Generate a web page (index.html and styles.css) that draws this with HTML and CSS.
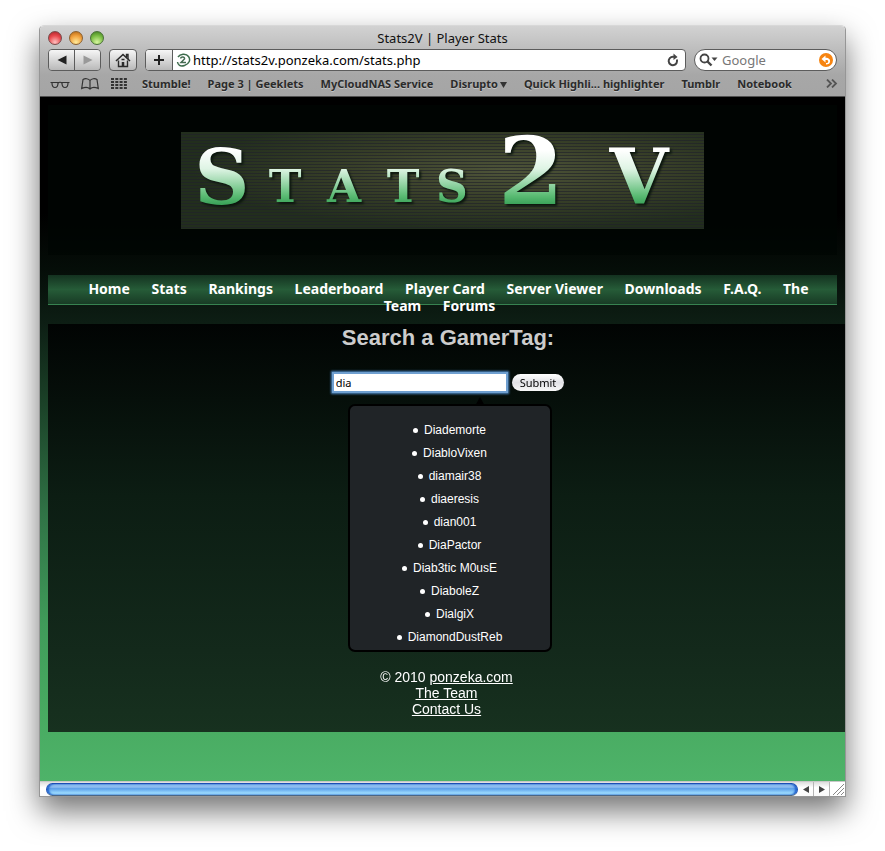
FILE: index.html
```html
<!DOCTYPE html>
<html lang="en">
<head>
<meta charset="utf-8">
<title>Stats2V | Player Stats</title>
<link rel="stylesheet" href="styles.css">
</head>
<body>
<div class="window">
  <header class="chrome">
    <div class="titlebar">
      <div class="lights">
        <button class="light red" aria-label="Close"></button>
        <button class="light amber" aria-label="Minimize"></button>
        <button class="light green" aria-label="Zoom"></button>
      </div>
      <div class="title">Stats2V | Player Stats</div>
    </div>
    <div class="toolbar">
      <div class="group">
        <button class="tool" aria-label="Back"><svg width="10" height="10" viewBox="0 0 10 10"><path d="M9.500 .5v9L.5 5z" fill="#222"/></svg></button>
        <button class="tool" aria-label="Forward"><svg width="10" height="10" viewBox="0 0 10 10"><path d="M.5 .5v9l9-4.500z" fill="#999"/></svg></button>
      </div>
      <button class="tool home" aria-label="Home"><svg width="16" height="15" viewBox="0 0 16 15" fill="none" stroke="#2b2b2b"><path d="M1 8 8 1.500 15 8" stroke-width="1.600"/><path d="M11.500 4V1.500h1.500V6M3.500 7.500v6h9v-6" stroke-width="1.400"/><path d="M8 9v4.500" stroke-width="2.500"/><path d="M6.500 6.500h3" stroke-width="1.500"/></svg></button>
      <div class="address">
        <button class="tool add" aria-label="Add bookmark"><svg width="12" height="12" viewBox="0 0 12 12"><path d="M6 1v10M1 6h10" stroke="#222" stroke-width="2"/></svg></button>
        <svg class="favicon" width="15" height="14" viewBox="0 0 15 14" fill="none"><path d="M2 4C4 1 10 0 12.500 3.500S13 11 8.500 12.500 2 12 1.500 9" stroke="#3d6b4c" stroke-width="1.500"/><path d="M4.500 5.500C5 3.500 9 3.500 8.500 6L5 9.500h5" stroke="#456b52" stroke-width="1.500"/></svg>
        <input class="url" type="text" aria-label="Address" value="http://stats2v.ponzeka.com/stats.php">
        <button class="plain reload" aria-label="Reload"><svg width="12" height="14" viewBox="0 0 12 14"><path d="M9.800 6.500A4.200 4.200 0 1 1 6 3.800h1.500" fill="none" stroke="#444" stroke-width="2"/><path d="M6.500 .5v6.500L10.500 4z" fill="#444"/></svg></button>
      </div>
      <div class="search">
        <svg width="19" height="14" viewBox="0 0 19 14"><circle cx="5.500" cy="5.500" r="4" fill="none" stroke="#444" stroke-width="1.800"/><path d="m8.500 8.500 4 4" stroke="#444" stroke-width="2.400"/><path d="M12.500 4.500h6l-3 3.500z" fill="#444"/></svg>
        <input class="google" type="text" aria-label="Search Google" placeholder="Google">
        <button class="plain" aria-label="Snap back"><svg width="14" height="14" viewBox="0 0 14 14"><circle cx="7" cy="7" r="7" fill="#f68411"/><path d="M2.500 6 6.500 2.500v2.200C10 4.700 11.500 6.500 11 9c-.4 1.800-2 2.500-4 2.500V10c1.500 0 2.200-.5 2.200-1.500 0-1-.9-1.500-2.700-1.400v2.400z" fill="#fff"/></svg></button>
      </div>
    </div>
    <nav class="bookmarks" aria-label="Bookmarks">
      <svg width="20" height="10" viewBox="0 0 20 10" fill="none" stroke="#333" stroke-width="1.200"><path d="M.5 3.500h8M11 3.500h8.500M8 4c1-1 3-1 4 0"/><path d="M2 4c0 3 1 4.500 3 4.500S8 7 8 4M12 4c0 3 1 4.500 3 4.500S18 7 18 4"/></svg>
      <svg class="book" width="18" height="12" viewBox="0 0 18 12" fill="none" stroke="#333" stroke-width="1.200"><path d="M9 2.500C7.500.5 4 .2 2 1.500L.7 10.500C4 9 7.500 9.500 9 11c1.500-1.500 5-2 8.300-.5L16 1.500C14 .2 10.500.5 9 2.500zV11"/></svg>
      <svg width="16" height="11" viewBox="0 0 16 11"><path d="M0 1h16M0 4h16M0 7h16M0 10h16" stroke="#333" stroke-width="2" stroke-dasharray="3 1.300"/></svg>
      <a class="first" href="#">Stumble!</a>
      <a href="#">Page 3 | Geeklets</a>
      <a href="#">MyCloudNAS Service</a>
      <a href="#">Disrupto<svg class="caret" width="7" height="6" viewBox="0 0 7 6"><path d="M0 0h7L3.500 6z" fill="#333"/></svg></a>
      <a href="#">Quick Highli... highlighter</a>
      <a href="#">Tumblr</a>
      <a href="#">Notebook</a>
      <button class="plain more" aria-label="More bookmarks"><svg width="12" height="9" viewBox="0 0 12 9"><path d="m1 .5 4 4-4 4m5-8 4 4-4 4" fill="none" stroke="#555" stroke-width="1.800"/></svg></button>
    </nav>
  </header>

  <main class="page">
    <div class="banner">
      <svg class="logo" viewBox="0 0 523 97" role="img" aria-label="Stats2V">
        <defs>
          <radialGradient id="glow" cx=".62" cy=".4" r=".6"><stop offset="0" stop-color="#4e5439"/><stop offset=".5" stop-color="#383f28"/><stop offset="1" stop-color="#222e1d"/></radialGradient>
          <linearGradient id="metal" gradientUnits="userSpaceOnUse" x1="0" y1="18" x2="0" y2="72"><stop offset="0" stop-color="#fff"/><stop offset=".35" stop-color="#def4e4"/><stop offset=".85" stop-color="#5abb73"/><stop offset="1" stop-color="#3ca35a"/></linearGradient>
          <pattern id="lines" width="4" height="3" patternUnits="userSpaceOnUse"><path d="M0 2.500h4" stroke="#20222a" stroke-opacity=".65"/></pattern>
        </defs>
        <rect width="523" height="97" fill="url(#glow)"/>
        <rect width="523" height="97" fill="url(#lines)"/>
        <g class="letters">
          <text class="big" x="41" y="72">S</text>
          <text class="small" x="104" y="70">T</text>
          <text class="small" x="163" y="70">A</text>
          <text class="small" x="222" y="70">T</text>
          <text class="small" x="271" y="70">S</text>
          <text class="two" x="350" y="72">2</text>
          <text class="big" x="458" y="72">V</text>
        </g>
      </svg>
    </div>

    <nav class="menu" aria-label="Site">
      <a href="#">Home</a>
      <a href="#">Stats</a>
      <a href="#">Rankings</a>
      <a href="#">Leaderboard</a>
      <a href="#">Player Card</a>
      <a href="#">Server Viewer</a>
      <a href="#">Downloads</a>
      <a href="#">F.A.Q.</a>
      <a href="#">The Team</a>
      <a href="#">Forums</a>
    </nav>

    <section class="content">
      <h1><label for="tag">Search a GamerTag:</label></h1>
      <form class="lookup">
        <input id="tag" type="text" value="dia" autocomplete="off" autofocus>
        <button type="submit">Submit</button>
      </form>
      <div class="suggestions">
        <ul>
          <li>Diademorte</li>
          <li>DiabloVixen</li>
          <li>diamair38</li>
          <li>diaeresis</li>
          <li>dian001</li>
          <li>DiaPactor</li>
          <li>Diab3tic M0usE</li>
          <li>DiaboleZ</li>
          <li>DialgiX</li>
          <li>DiamondDustReb</li>
        </ul>
      </div>
      <footer>
        <div>© 2010 <a href="#">ponzeka.com</a></div>
        <div><a href="#">The Team</a></div>
        <div><a href="#">Contact Us</a></div>
      </footer>
    </section>
  </main>

  <div class="scrollbar">
    <div class="thumb"></div>
    <button class="step" aria-label="Scroll left"><svg width="6" height="7" viewBox="0 0 6 7"><path d="M6 0v7L0 3.500z" fill="#444"/></svg></button>
    <button class="step" aria-label="Scroll right"><svg width="6" height="7" viewBox="0 0 6 7"><path d="M0 0v7l6-3.500z" fill="#444"/></svg></button>
    <svg class="grip" width="15" height="14" viewBox="0 0 15 14"><path d="M3 13 14 2M7 13l7-7M11 13l3-3" stroke="#888"/></svg>
  </div>
</div>
</body>
</html>
```
FILE: styles.css
```css
* { box-sizing: border-box; }

body {
  margin: 0;
  padding: 25px 39px 54px;
  background: #fff;
  font-family: "Liberation Sans", Arial, sans-serif;
}

button, input { font: inherit; margin: 0; padding: 0; }
svg { display: block; flex: none; }

.window {
  border: 1px solid #969696;
  border-top-color: #d8d8d8;
  border-radius: 5px 5px 0 0;
  overflow: hidden;
  box-shadow: 0 14px 30px rgba(0, 0, 0, .55);
}

/* Browser chrome */
.chrome {
  background: linear-gradient(#d2d2d2, #a7a7a7 70%, #a5a5a5);
  border-bottom: 1px solid #505050;
  font-family: "Noto Sans", sans-serif;
}
.titlebar {
  display: grid;
  grid-template-columns: 80px 1fr 80px;
  align-items: center;
  height: 23px;
}
.lights { display: flex; gap: 7px; padding-left: 8px; }
.light {
  width: 14px;
  height: 14px;
  border: 1px solid #7a4a4a;
  border-radius: 50%;
}
.red { background: radial-gradient(circle at 50% 85%, #ffc0c0, #e8484d 55%, #a52026); }
.amber { background: radial-gradient(circle at 50% 85%, #ffeb9c, #f0a03c 55%, #ad6212); border-color: #8a6030; }
.green { background: radial-gradient(circle at 50% 85%, #d8f7a0, #7bbd45 55%, #3c7a1c); border-color: #4a7038; }
.title { font-size: 13px; line-height: 18px; text-align: center; color: #111; }

.toolbar { display: flex; gap: 8px; padding: 0 8px; height: 22px; }
.group, .address, .search {
  display: flex;
  align-items: center;
  border: 1px solid #5c5c5c;
  border-radius: 4px;
  overflow: hidden;
}
.tool {
  display: flex;
  align-items: center;
  justify-content: center;
  width: 25px;
  height: 20px;
  border: 0;
  background: linear-gradient(#f6f6f6, #b9b9b9);
}
.group .tool + .tool { width: 26px; border-left: 1px solid #5c5c5c; }
.home { width: 28px; height: 22px; border: 1px solid #5c5c5c; border-radius: 4px; }
.address { flex: 1; background: #fff; }
.add { width: 27px; border-right: 1px solid #5c5c5c; }
.favicon { margin: 0 2px 0 3px; }
.url, .google {
  flex: 1;
  min-width: 0;
  border: 0;
  outline: 0;
  background: none;
  font-size: 13px;
  color: #000;
}
.plain { display: flex; border: 0; background: none; }
.reload { margin-right: 6px; }
.search { width: 143px; padding: 0 3px 0 4px; border-radius: 11px; background: #fff; }
.google { padding-left: 4px; }
.google::placeholder { color: #777; opacity: 1; }

.bookmarks {
  display: flex;
  align-items: center;
  height: 25px;
  padding: 0 7px 0 10px;
  white-space: nowrap;
}
.bookmarks a {
  margin-right: 17px;
  font-size: 11px;
  font-weight: 700;
  color: #2b2b2b;
  text-decoration: none;
  text-shadow: 0 1px 0 #c4c4c4;
}
.bookmarks .book { margin: 0 12px 0 11px; }
.bookmarks .first { margin-left: 15px; }
.caret { display: inline-block; margin-left: 2px; }
.more { margin-left: auto; }

/* Site */
.page {
  padding: 8px 0 49px 8px;
  background: linear-gradient(#000 0%, #000 17%, #050d08 25%, #0d1e14 33%, #1b4228 45%, #307346 61%, #409b5a 77%, #48aa61 90%, #4eb369 100%);
}
.banner {
  margin-right: 8px;
  padding: 27px 20px 26px;
  background: rgba(0, 5, 3, .7);
}
.logo { width: 523px; max-width: 100%; margin: 0 auto; overflow: visible; }
.letters {
  font-family: "DejaVu Serif", serif;
  font-weight: 700;
  text-anchor: middle;
  fill: url(#metal);
  filter: drop-shadow(2px 2px 1px #0b160d);
}
.big { font-size: 76px; }
.small { font-size: 44px; }
.two { font-size: 94px; }

.menu {
  height: 30px;
  margin: 20px 8px 19px 0;
  padding: 5px 19px 0 22px;
  border-bottom: 1px solid #378250;
  background: linear-gradient(#143220, #265c38 50%, #183b25);
  font: 700 14px/17px "Noto Sans", sans-serif;
  text-align: center;
}
.menu a { margin: 0 9px; color: #fff; text-decoration: none; }

.content {
  display: flex;
  flex-direction: column;
  align-items: center;
  padding-bottom: 15px;
  background: linear-gradient(#010403, #0c1d13 42%, #13291b 80%, #17311f);
  color: #fff;
}
h1 { margin: 0; padding-left: 3px; font-size: 22px; line-height: 28px; color: #ccc; }
.lookup { display: flex; align-items: center; gap: 4px; margin: 20px 0 11px; padding-left: 3px; }
.lookup input {
  width: 176px;
  height: 21px;
  padding: 0 2px;
  border: 2px solid #6f9fd0;
  outline: 0;
  background: #fff;
  box-shadow: 0 0 2px 1px #4b84bd;
  font: 11px "Noto Sans", sans-serif;
  color: #000;
}
.lookup button {
  height: 17px;
  padding: 0 8px;
  border: 0;
  border-radius: 9px;
  background: linear-gradient(#fff, #e2e2e6 50%, #f8f8f8);
  font: 11px/17px "Noto Sans", sans-serif;
  color: #000;
}
.suggestions {
  position: relative;
  width: 204px;
  margin-left: 6px;
  border: 2px solid #000;
  border-radius: 7px;
  background: #202427;
}
.suggestions::before {
  content: "";
  position: absolute;
  left: 125px;
  bottom: 100%;
  border: 5px solid transparent;
  border-top: 0;
  border-bottom: 9px solid #000;
}
ul {
  margin: 0;
  padding: 13px 0 1px;
  list-style: none;
  font-size: 12px;
  line-height: 23px;
  text-align: center;
}
li::before {
  content: "";
  display: inline-block;
  width: 5px;
  height: 5px;
  margin: 0 6px 1px 0;
  border-radius: 50%;
  background: #fff;
}
footer { margin-top: 17px; font-size: 14px; line-height: 16px; text-align: center; }
footer a { color: #fff; }

/* Horizontal scrollbar */
.scrollbar {
  display: flex;
  align-items: center;
  height: 15px;
  padding-left: 6px;
  border-top: 1px solid #c8c8c8;
  background: linear-gradient(#ddd, #fff 40%, #fafafa);
}
.thumb {
  flex: 1;
  height: 13px;
  border: 1px solid #1b4fb4;
  border-bottom-color: #4b6684;
  border-radius: 7px;
  background: linear-gradient(#a5cdf4, #7fb4ee 35%, #5c9fe9 42%, #8fd0fb 75%, #b4ecff);
  box-shadow: inset 2px 0 2px #1f62cf, inset -2px 0 2px #1f62cf;
}
.step {
  display: flex;
  align-items: center;
  justify-content: center;
  width: 16px;
  height: 14px;
  border: 0;
  border-right: 1px solid #b5b5b5;
  background: none;
}
.grip { background: #fff; }
```
